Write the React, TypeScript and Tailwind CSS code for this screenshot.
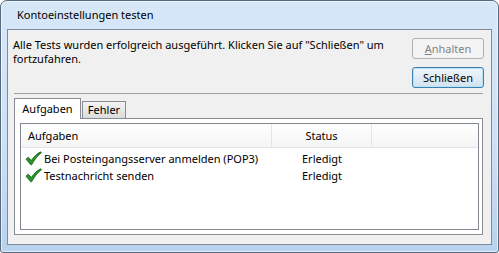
import React from "react";

function Check() {
  return (
    <svg width="17" height="15" viewBox="0 0 17 15" className="shrink-0">
      <path
        d="M1 8.2 L3.3 6.2 L6.3 9.4 C9 5.6 12 2.6 15.6 0.8 L16.4 1.8 C12.8 4.4 9.6 8.4 6.6 13.8 L5.8 13.8 Z"
        fill="#2a952a"
        stroke="#125c16"
        strokeWidth="0.8"
        strokeLinejoin="round"
      />
    </svg>
  );
}

export default function App() {
  return (
    <div className="w-[499px] h-[253px] font-['Noto_Sans',sans-serif] text-[11px] leading-[14px] text-black">
      <div className="flex h-full flex-col rounded-t-[7px] rounded-b-[3px] border border-[#56697f] bg-gradient-to-b from-[#d6e7f8] via-[#cfe2f5] to-[#b9d2ed] px-[6px] pb-[7px] shadow-[inset_0_0_0_1px_rgba(255,255,255,0.6)]">
        <div className="flex h-[28px] items-center pl-[10px] pb-[1px] text-[11px]">
          <span>Kontoeinstellungen testen</span>
        </div>
        <div className="flex flex-1 flex-col border border-[#7f8b99] bg-[#f0f0f0]">
          <div className="flex h-[63px] justify-between">
            <div className="pl-[5px] pt-[8px] whitespace-nowrap">
              Alle Tests wurden erfolgreich ausgeführt. Klicken Sie auf "Schließen" um
              <br />
              fortzufahren.
            </div>
            <div className="flex shrink-0 flex-col gap-[8px] pt-[8px] pr-[7px]">
              <div className="flex h-[21px] w-[72px] items-center justify-center rounded-[3px] border border-[#adb2b5] bg-[#f4f4f4] text-[#838383]">
                <span>
                  <span className="underline">A</span>nhalten
                </span>
              </div>
              <div className="flex h-[21px] w-[72px] items-center justify-center rounded-[3px] border border-[#3c7fb1] bg-gradient-to-b from-[#eef6fc] to-[#d2e2ee] shadow-[inset_0_0_0_1px_#b8e4fa]">
                Schließen
              </div>
            </div>
          </div>
          <div className="ml-[6px] mr-[8px] h-px bg-[#a0a0a0]" />
          <div className="mt-[4px] flex flex-col pl-[6px] pr-[8px]">
            <div className="relative z-10 -mb-px flex items-end">
              <div className="flex h-[21px] w-[67px] items-start justify-center border-x border-t border-[#898c95] bg-white pt-[3px]">
                Aufgaben
              </div>
              <div className="ml-px flex h-[18px] w-[44px] items-start justify-center border-x border-t border-b border-[#898c95] bg-gradient-to-b from-[#f3f3f3] to-[#dcdcdc] pt-[1px]">
                Fehler
              </div>
            </div>
            <div className="flex h-[117px] flex-col border border-[#898c95] bg-white pl-[5px] pr-[3px] pt-[4px] pb-[4px]">
              <div className="flex flex-1 flex-col border border-[#828790] bg-white">
                <div className="flex h-[24px] border-b border-[#e5e5e5] bg-gradient-to-b from-white to-[#f4f5f6]">
                  <div className="flex w-[251px] items-center border-r border-[#e3e5e8] pl-[7px]">
                    Aufgaben
                  </div>
                  <div className="flex w-[100px] items-center justify-center border-r border-[#e3e5e8]">
                    Status
                  </div>
                  <div className="flex-1" />
                </div>
                <div className="pt-[2px]">
                  <div className="flex h-[17px] whitespace-nowrap">
                    <div className="flex w-[251px] items-center gap-[2px] pl-[4px]">
                      <Check />
                      <span>Bei Posteingangsserver anmelden (POP3)</span>
                    </div>
                    <div className="flex w-[100px] items-center justify-center">Erledigt</div>
                  </div>
                  <div className="flex h-[17px] whitespace-nowrap">
                    <div className="flex w-[251px] items-center gap-[2px] pl-[4px]">
                      <Check />
                      <span>Testnachricht senden</span>
                    </div>
                    <div className="flex w-[100px] items-center justify-center">Erledigt</div>
                  </div>
                </div>
              </div>
            </div>
          </div>
        </div>
      </div>
    </div>
  );
}
